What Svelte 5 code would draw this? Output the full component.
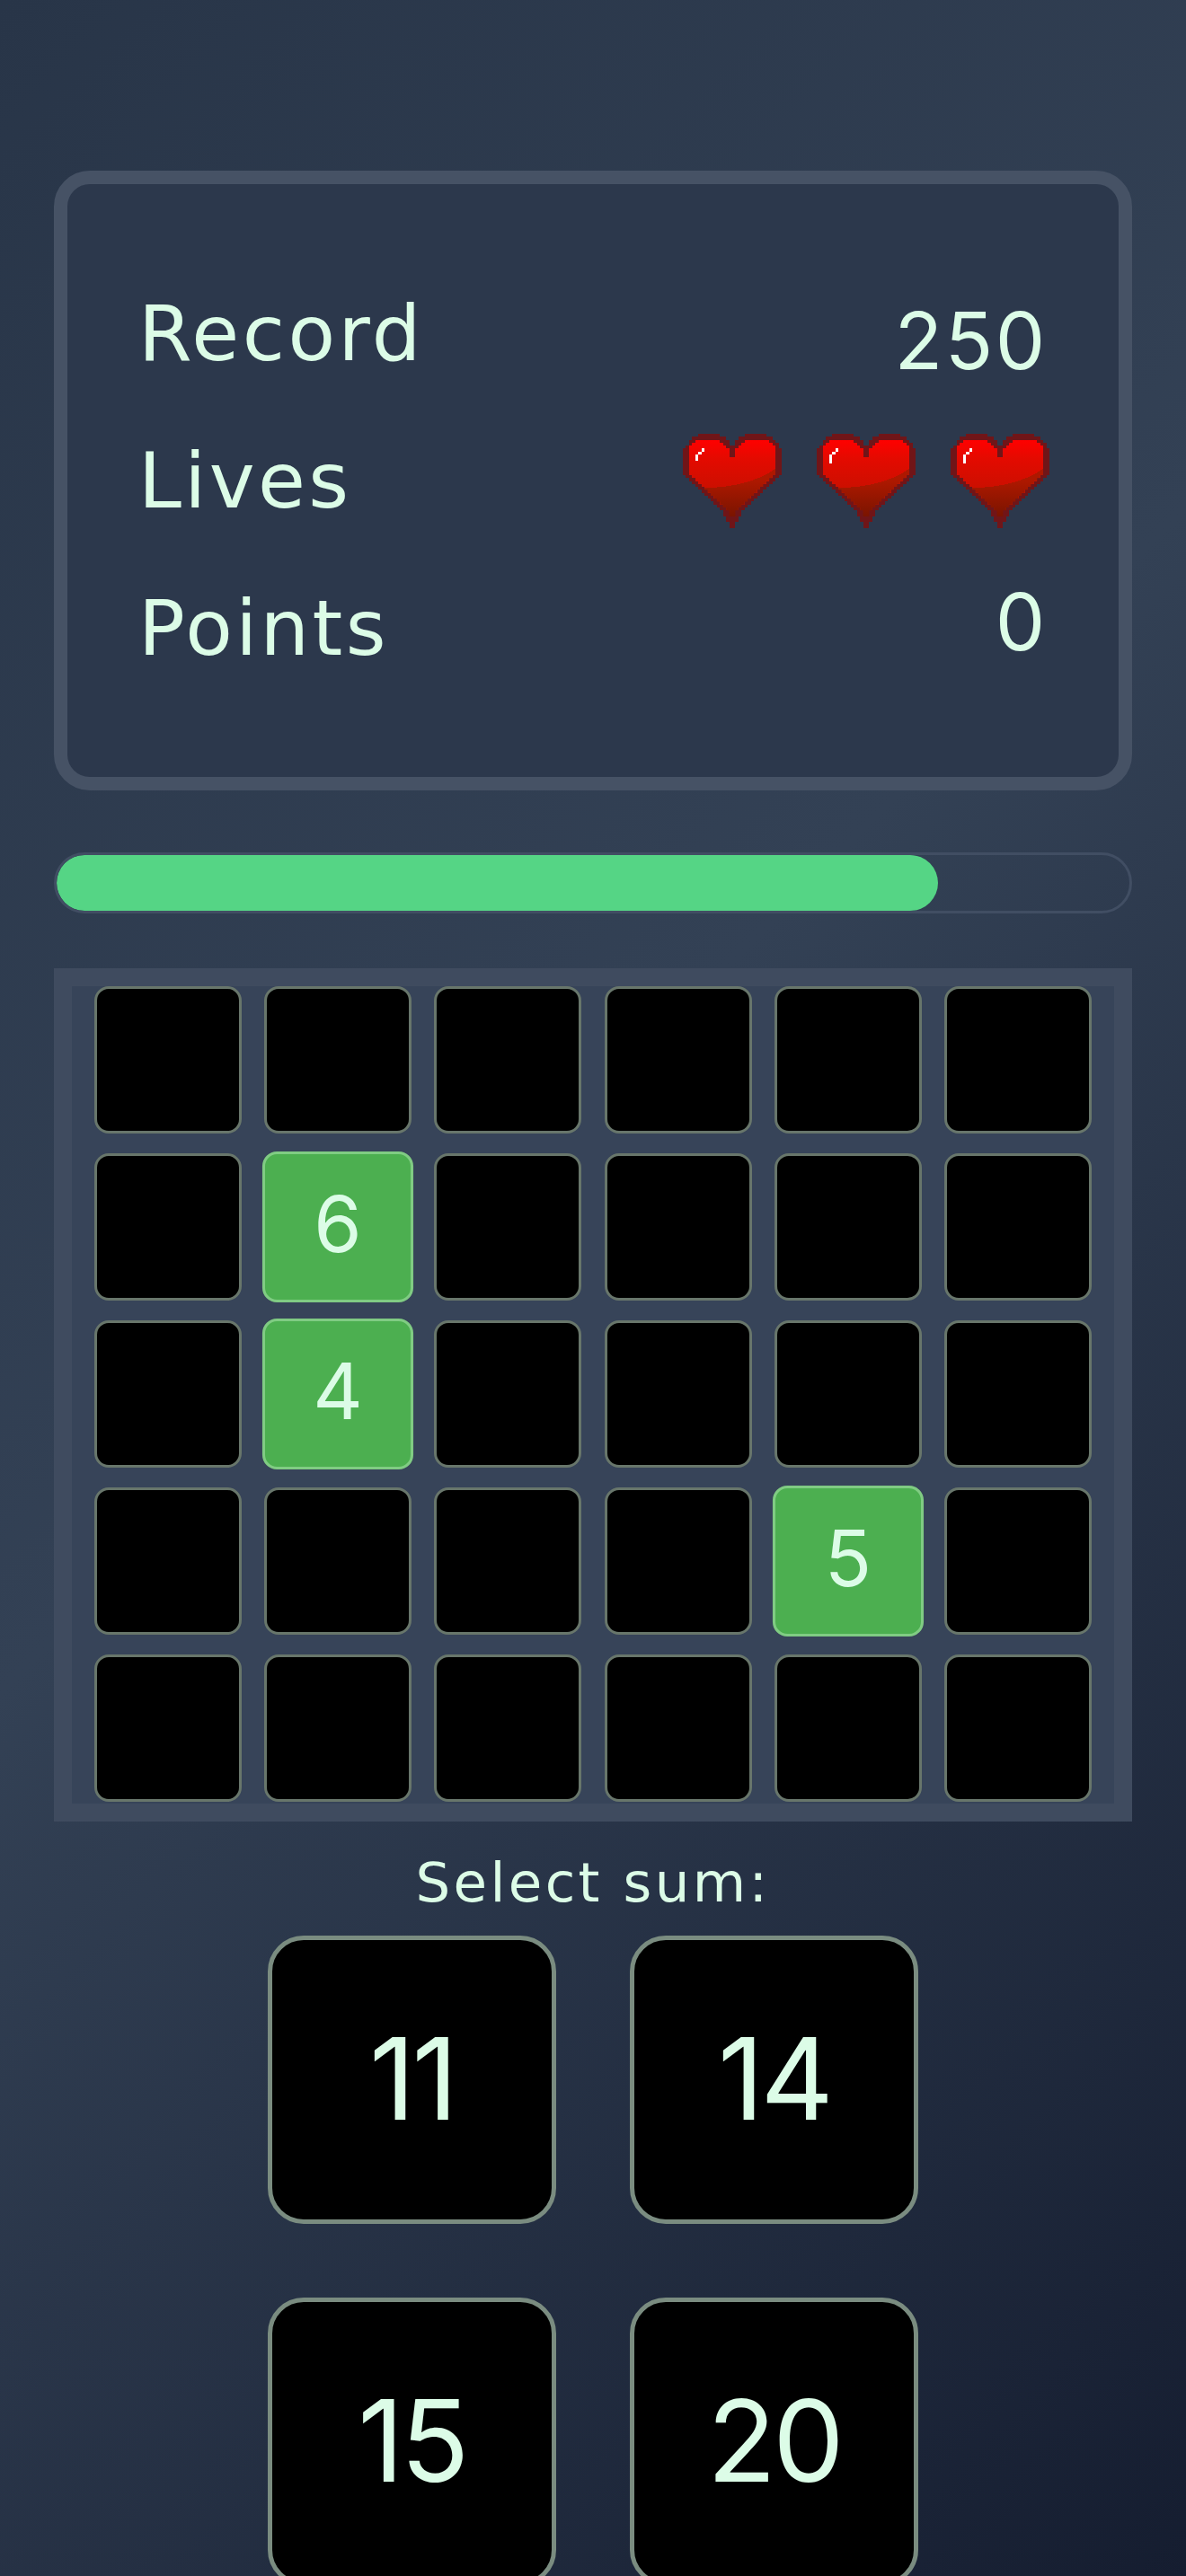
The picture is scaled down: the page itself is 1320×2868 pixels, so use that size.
<script lang="ts">
// Number-sum game board: score card, time bar, 6x5 grid and the answer buttons.
const numbers: Record<number, number> = { 7: 6, 13: 4, 22: 5 };
const cells = Array.from({ length: 30 }, (_, i) => numbers[i] ?? null);
const answers = [11, 14, 15, 20];

// pixel-art heart, one [left, right] span list per row
const outerRows = [
	[[6, 13], [21, 28]], [[4, 15], [19, 30]], [[3, 16], [18, 31]], [[3, 16], [18, 32]],
	[[2, 32]], ...Array(9).fill([[1, 33]]),
	[[2, 32]], [[3, 31]], [[4, 30]], [[5, 29]], [[6, 28]], [[7, 27]], [[8, 26]], [[9, 25]],
	[[10, 24]], [[11, 23]], [[12, 22]], [[13, 21]], [[14, 20]], [[14, 20]], [[15, 19]],
	[[15, 19]], [[16, 18]], [[16, 18]]
];
const innerRows: Record<number, number[][]> = {
	2: [[5, 13], [21, 29]], 3: [[4, 14], [20, 30]], 4: [[3, 15], [19, 31]], 5: [[3, 16], [18, 31]],
	6: [[3, 16], [18, 31]], 7: [[3, 16], [18, 31]]
};
for (let y = 8; y <= 13; y++) innerRows[y] = [[3, 31]];
for (let y = 14; y <= 28; y++) {
	const [l, r] = outerRows[y][0];
	innerRows[y] = [[l + 2, r - 2]];
}
function spansToPath(rows: [number, number[][]][]) {
	let d = '';
	for (const [y, spans] of rows) {
		for (const [l, r] of spans) d += `M${l} ${y}H${r}V${y + 1}H${l}Z`;
	}
	return d;
}
const outerPath = spansToPath(outerRows.map((s, y) => [y, s] as [number, number[][]]));
const innerPath = spansToPath(Object.entries(innerRows).map(([y, s]) => [+y, s] as [number, number[][]]));
const shine = [2, 3, 3];
</script>

<main class="page">
	<section class="stats">
		<div class="row">
			<span class="label">Record</span>
			<span class="value low">250</span>
		</div>
		<div class="row">
			<span class="label">Lives</span>
			<div class="hearts">
				{#each shine as len, i}
					<svg class="heart" viewBox="1 0 32 32" preserveAspectRatio="none" shape-rendering="crispEdges" aria-label="life">
						<defs>
							<linearGradient id="top{i}" x1="0" y1="2" x2="0" y2="20" gradientUnits="userSpaceOnUse">
								<stop offset="0" stop-color="#ff0000" />
								<stop offset="0.35" stop-color="#e40a00" />
								<stop offset="1" stop-color="#c81000" />
							</linearGradient>
							<linearGradient id="low{i}" x1="0" y1="16" x2="0" y2="29" gradientUnits="userSpaceOnUse">
								<stop offset="0" stop-color="#ad1800" />
								<stop offset="1" stop-color="#761400" />
							</linearGradient>
							<clipPath id="clip{i}"><path d={innerPath} /></clipPath>
						</defs>
						<path d={outerPath} fill="#701518" />
						<path d={innerPath} fill="url(#top{i})" />
						<g clip-path="url(#clip{i})">
							<path d="M0 17.5C10 19.5 26 18 34 9V32H0Z" fill="url(#low{i})" />
						</g>
						<rect x="5" y={7} width="1" height={len} fill="#fff" />
						<rect x="6" y="6" width="1" height="1" fill="#fff" />
						<rect x="7" y="5" width="1" height="1" fill="#fff" />
					</svg>
				{/each}
			</div>
		</div>
		<div class="row">
			<span class="label">Points</span>
			<span class="value high">0</span>
		</div>
	</section>

	<div class="progress">
		<div class="fill" style="width: 82.2%"></div>
	</div>

	<section class="board">
		<div class="grid">
			{#each cells as n}
				<div class="cell" class:on={n !== null}>{n ?? ''}</div>
			{/each}
		</div>
	</section>

	<p class="prompt">Select sum:</p>
	<div class="answers">
		{#each answers as a}
			<button type="button" class="answer">{a}</button>
		{/each}
	</div>
</main>

<style>
	:global(body) {
		margin: 0;
	}
	.page {
		box-sizing: border-box;
		height: 2868px;
		overflow: hidden;
		padding: 190px 60px 0;
		background: linear-gradient(135deg, #283548 0%, #334155 45%, #151d30 100%);
		color: #dcfce7;
		font-family: Inter, "Noto Sans", sans-serif;
	}
	.stats {
		box-sizing: border-box;
		height: 690px;
		padding: 0 79px;
		border: 15px solid #465265;
		border-radius: 40px;
		background: #2c384c;
		display: flex;
		flex-direction: column;
		justify-content: center;
	}
	.row {
		height: 164px;
		display: flex;
		align-items: center;
		justify-content: space-between;
	}
	.label {
		font-family: "DejaVu Sans", sans-serif;
		font-size: 86px;
		letter-spacing: 0.04em;
		line-height: 1;
	}
	.value {
		font-size: 88px;
		letter-spacing: 0.03em;
		line-height: 1;
	}
	.value.low {
		margin-top: 16px;
	}
	.value.high {
		margin-bottom: 14px;
	}
	.hearts {
		display: flex;
		gap: 39px;
		margin-right: -2px;
	}
	.heart {
		width: 110px;
		height: 105px;
		display: block;
	}
	.progress {
		box-sizing: border-box;
		height: 68px;
		margin-top: 69px;
		border: 3px solid #414e63;
		border-radius: 34px;
		overflow: hidden;
	}
	.fill {
		height: 100%;
		border-radius: 31px;
		background: #55d585;
	}
	.board {
		box-sizing: border-box;
		height: 950px;
		margin-top: 61px;
		border: 20px solid #3f4b5f;
		background: #374459;
	}
	.grid {
		display: grid;
		grid-template-columns: repeat(6, 164px);
		grid-auto-rows: 164px;
		justify-content: space-evenly;
		row-gap: 22px;
	}
	.cell {
		box-sizing: border-box;
		padding-bottom: 8px;
		border: 3px solid #68766b;
		border-radius: 16px;
		background: #000;
		display: flex;
		align-items: center;
		justify-content: center;
		font-size: 84px;
	}
	.cell.on {
		border-color: #80cc83;
		background: #4caf50;
		color: #dcfce7;
		transform: scale(1.025);
	}
	.prompt {
		margin: 0;
		height: 127px;
		display: flex;
		align-items: center;
		justify-content: center;
		padding-top: 8px;
		box-sizing: border-box;
		font-family: "DejaVu Sans", sans-serif;
		font-size: 61px;
		letter-spacing: 0.055em;
	}
	.answers {
		display: grid;
		grid-template-columns: repeat(2, 321px);
		grid-auto-rows: 321px;
		gap: 82px;
		justify-content: center;
	}
	.answer {
		border: 5px solid #7a8c80;
		border-radius: 40px;
		background: #000;
		color: #dcfce7;
		font: inherit;
		font-size: 126px;
		letter-spacing: -0.03em;
		padding: 0 0 3px;
	}
</style>
